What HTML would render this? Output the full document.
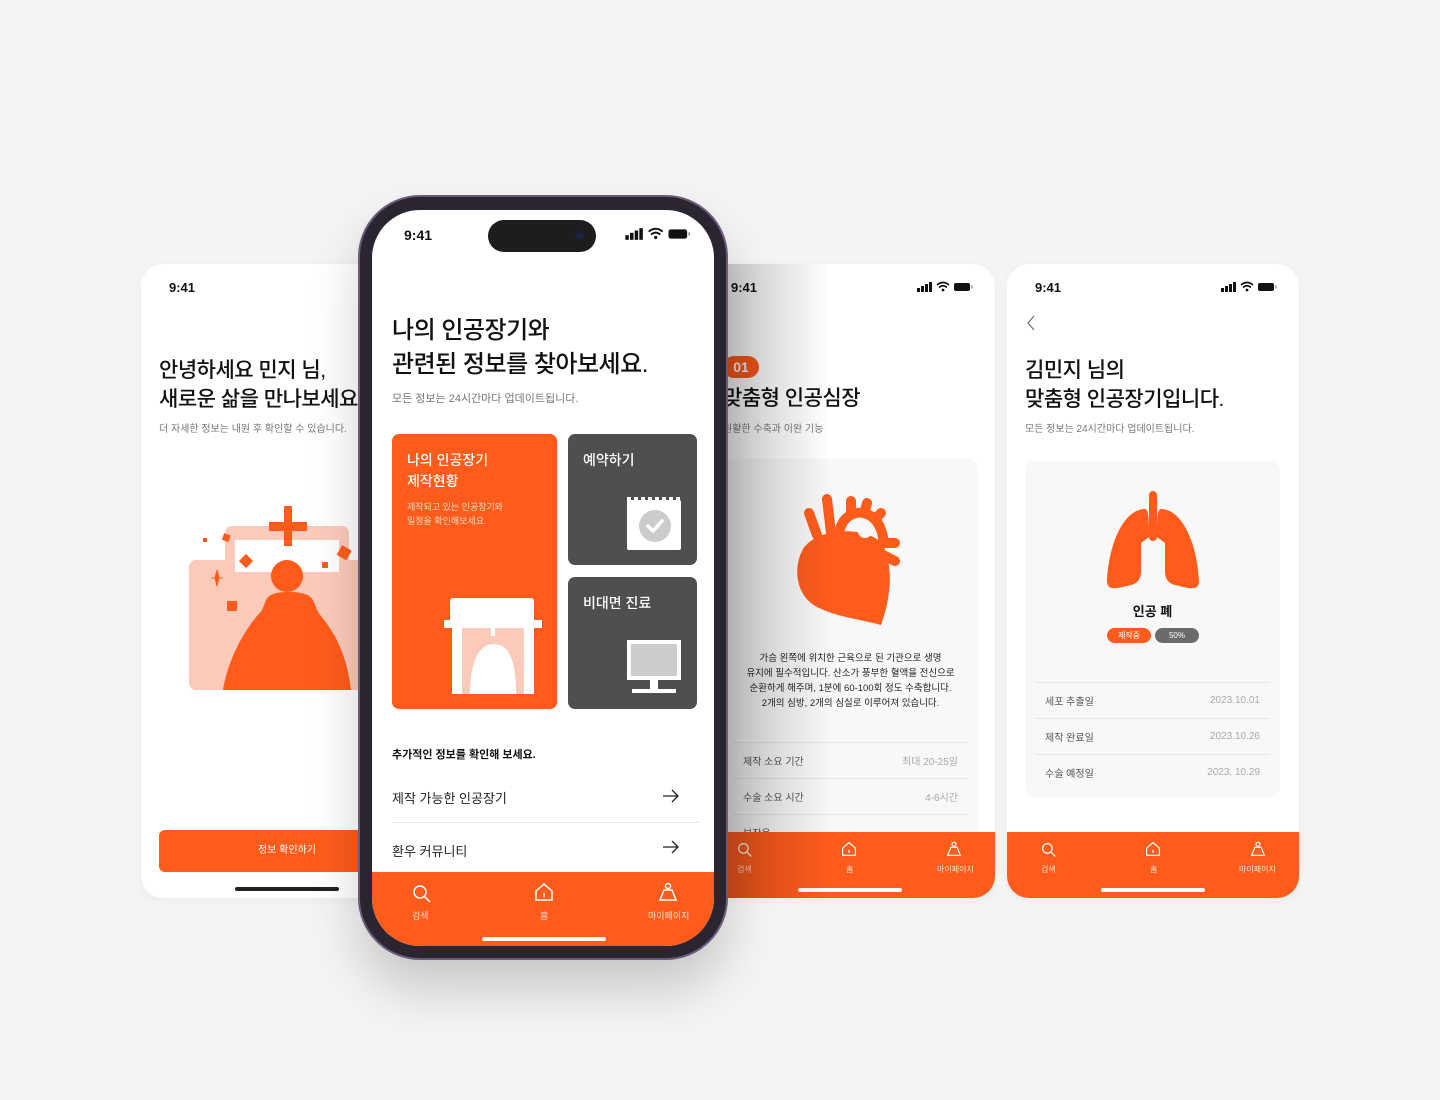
<!DOCTYPE html>
<html><head><meta charset="utf-8"><style>
*{margin:0;padding:0;box-sizing:border-box}
body{width:1440px;height:1100px;background:#f4f4f4;position:relative;overflow:hidden;font-family:"Liberation Sans","Noto Sans CJK KR",sans-serif;color:#111}
.a{position:absolute}
.card{position:absolute;background:#fff;border-radius:22px;overflow:hidden;box-shadow:0 2px 10px rgba(0,0,0,.04)}
.t{font-weight:700;font-size:13px}
.nav{position:absolute;left:0;right:0;bottom:0;height:66px;background:#ff5c1c;color:#ffe0d0;font-size:8px}
.bar{position:absolute;height:4px;border-radius:2px;background:#fff}
.h1{font-size:21px;font-weight:500;line-height:29px;letter-spacing:-.5px}
.sub{font-size:10px;color:#777}
.row{position:absolute;left:0;right:0;height:36px;border-top:1px solid #e6e6e6;font-size:10px;color:#555;padding:0 10px;display:flex;justify-content:space-between;align-items:center}
.row span:last-child{color:#aaa}
svg{position:absolute}
</style></head><body>

<!-- left card -->
<div class="card" style="left:141px;top:264px;width:292px;height:634px">
  <div class="a t" style="left:28px;top:16px">9:41</div>
  <div class="a h1" style="left:18px;top:92px;white-space:nowrap">안녕하세요 민지 님,<br>새로운 삶을 만나보세요</div>
  <div class="a sub" style="left:18px;top:156px">더 자세한 정보는 내원 후 확인할 수 있습니다.</div>
  <svg style="left:48px;top:240px" width="180" height="190" viewBox="0 0 180 190">
    <rect x="36" y="22" width="124" height="60" rx="7" fill="#fccabb"/>
    <rect x="0" y="56" width="180" height="130" rx="7" fill="#fccabb"/>
    <rect x="46" y="36" width="104" height="32" fill="#fff"/>
    <rect x="95" y="2" width="8" height="40" fill="#ff5c1c"/><rect x="80" y="18" width="38" height="9" fill="#ff5c1c"/>
    <circle cx="98" cy="72" r="16" fill="#ff5c1c"/>
    <path d="M34 186 C40 150 60 120 70 110 C80 100 70 88 100 88 C130 88 122 100 132 112 C145 128 158 150 162 186Z" fill="#ff5c1c"/>
    <rect x="52" y="52" width="10" height="10" fill="#ff5c1c" transform="rotate(45 57 57)"/>
    <rect x="38" y="97" width="10" height="10" fill="#ff5c1c"/>
    <rect x="150" y="43" width="11" height="11" fill="#ff5c1c" transform="rotate(30 155 48)"/>
    <rect x="34" y="30" width="7" height="7" fill="#ff5c1c" transform="rotate(20 37 33)"/>
    <rect x="133" y="58" width="6" height="6" fill="#ff5c1c"/>
    <rect x="14" y="34" width="4" height="4" fill="#ff5c1c"/>
    <path d="M28 66 L30 74 L28 82 L26 74Z M22 74 H34" fill="#ff5c1c" stroke="#ff5c1c" stroke-width="1"/>
  </svg>
  <div class="a" style="left:18px;top:566px;width:256px;height:42px;background:#ff5c1c;border-radius:6px;color:#fff;font-size:10px;text-align:center;line-height:42px">정보 확인하기</div>
  <div class="bar" style="left:94px;top:623px;width:104px;background:#222"></div>
</div>

<!-- heart card -->
<div class="card" style="left:703px;top:264px;width:292px;height:634px">
  <div class="a t" style="left:28px;top:16px">9:41</div>
  <svg style="left:214px;top:17px" width="56" height="12" viewBox="0 0 56 12"><rect x="0" y="7" width="3" height="4" fill="#111"/><rect x="4" y="5" width="3" height="6" fill="#111"/><rect x="8" y="3" width="3" height="8" fill="#111"/><rect x="12" y="1" width="3" height="10" fill="#111"/><path d="M20 4 Q26 -1 32 4 M22 6.5 Q26 3 30 6.5" stroke="#111" stroke-width="1.6" fill="none"/><circle cx="26" cy="9" r="1.4" fill="#111"/><rect x="37" y="2" width="16" height="8" rx="2" fill="#111"/><rect x="54" y="4.5" width="1.5" height="3" fill="#999"/></svg>
  <div class="a" style="left:20px;top:92px;width:36px;height:22px;border-radius:11px;background:#ff5c1c;color:#fff;font-weight:700;font-size:14px;text-align:center;line-height:22px">01</div>
  <div class="a h1" style="left:20px;top:120px">맞춤형 인공심장</div>
  <div class="a sub" style="left:20px;top:156px">원활한 수축과 이완 기능</div>
  <div class="a" style="left:20px;top:195px;width:255px;height:420px;background:#f8f8f8;border-radius:10px">
    <svg style="left:72px;top:32px" width="110" height="140" viewBox="0 0 110 140">
      <g stroke="#ff5c1c" stroke-width="10" stroke-linecap="round" fill="none">
        <path d="M14 22 L22 44"/><path d="M32 8 L36 42"/>
        <path d="M44 44 C46 24 62 18 74 24 C82 28 86 36 88 46"/>
        <path d="M56 22 L56 10"/><path d="M70 20 L72 12"/><path d="M80 28 L86 22"/>
        <path d="M86 52 L100 52"/><path d="M88 64 L100 70"/>
      </g>
      <path d="M8 58 C-2 76 0 104 22 116 C42 126 64 128 86 134 C94 112 100 80 88 54 C76 36 24 34 8 58Z" fill="#ff5c1c"/>
      <circle cx="70" cy="40" r="7" fill="#f8f8f8"/>
    </svg>
    <div class="a" style="left:0;right:0;top:192px;text-align:center;font-size:9.5px;line-height:15px;color:#222">가슴 왼쪽에 위치한 근육으로 된 기관으로 생명<br>유지에 필수적입니다. 산소가 풍부한 혈액을 전신으로<br>순환하게 해주며, 1분에 60-100회 정도 수축합니다.<br>2개의 심방, 2개의 심실로 이루어져 있습니다.</div>
    <div class="row" style="top:283px;margin:0 10px"><span>제작 소요 기간</span><span>최대 20-25일</span></div>
    <div class="row" style="top:319px;margin:0 10px"><span>수술 소요 시간</span><span>4-6시간</span></div>
    <div class="row" style="top:355px;margin:0 10px"><span>부작용</span><span></span></div>
  </div>
  <div class="nav">
    <svg style="left:34px;top:10px" width="16" height="16" viewBox="0 0 20 20" fill="none" stroke="#fff" stroke-width="1.5"><circle cx="8" cy="8" r="6"/><path d="M12.5 12.5L18 18"/></svg>
    <svg style="left:138px;top:9px" width="16" height="16" viewBox="0 0 20 20" fill="none" stroke="#fff" stroke-width="1.5"><path d="M2 9L10 2L18 9V18H2Z"/><path d="M10 11V15"/></svg>
    <svg style="left:243px;top:9px" width="16" height="16" viewBox="0 0 20 20" fill="none" stroke="#fff" stroke-width="1.5"><circle cx="10" cy="4" r="2.5"/><path d="M6 8H14L18 18H2Z"/></svg>
    <div class="a" style="left:34px;top:32px">검색</div><div class="a" style="left:143px;top:32px">홈</div><div class="a" style="left:234px;top:32px">마이페이지</div>
    <div class="bar" style="left:95px;top:56px;width:104px"></div>
  </div>
</div>
<div class="a" style="left:700px;top:264px;width:130px;height:634px;background:linear-gradient(90deg,rgba(0,0,0,.28),rgba(0,0,0,0))"></div>

<!-- lung card -->
<div class="card" style="left:1007px;top:264px;width:292px;height:634px">
  <div class="a t" style="left:28px;top:16px">9:41</div>
  <svg style="left:214px;top:17px" width="56" height="12" viewBox="0 0 56 12"><rect x="0" y="7" width="3" height="4" fill="#111"/><rect x="4" y="5" width="3" height="6" fill="#111"/><rect x="8" y="3" width="3" height="8" fill="#111"/><rect x="12" y="1" width="3" height="10" fill="#111"/><path d="M20 4 Q26 -1 32 4 M22 6.5 Q26 3 30 6.5" stroke="#111" stroke-width="1.6" fill="none"/><circle cx="26" cy="9" r="1.4" fill="#111"/><rect x="37" y="2" width="16" height="8" rx="2" fill="#111"/><rect x="54" y="4.5" width="1.5" height="3" fill="#999"/></svg>
  <svg style="left:18px;top:50px" width="12" height="18" viewBox="0 0 12 18"><path d="M9 2L3 9L9 16" stroke="#777" stroke-width="1.3" fill="none"/></svg>
  <div class="a h1" style="left:18px;top:92px">김민지 님의<br>맞춤형 인공장기입니다.</div>
  <div class="a sub" style="left:18px;top:156px">모든 정보는 24시간마다 업데이트됩니다.</div>
  <div class="a" style="left:18px;top:197px;width:255px;height:336px;background:#f8f8f8;border-radius:10px">
    <svg style="left:80px;top:30px" width="96" height="102" viewBox="0 0 96 102">
      <rect x="44" y="0" width="8" height="50" rx="4" fill="#ff5c1c"/>
      <path d="M40 18 C20 18 4 50 2 90 C2 102 16 96 26 94 C34 92 36 86 36 80 L36 52 L44 46 C44 30 44 18 40 18Z" fill="#ff5c1c"/>
      <path d="M56 18 C76 18 92 50 94 90 C94 102 80 96 70 94 C62 92 60 86 60 80 L60 52 L52 46 C52 30 52 18 56 18Z" fill="#ff5c1c"/>
    </svg>
    <div class="a" style="left:0;right:0;top:140px;text-align:center;font-weight:700;font-size:13px">인공 폐</div>
    <div class="a" style="left:82px;top:167px;width:44px;height:15px;border-radius:8px;background:#ff5c1c;color:#fff;font-size:8px;text-align:center;line-height:15px">제작중</div>
    <div class="a" style="left:130px;top:167px;width:44px;height:15px;border-radius:8px;background:#6b6b6b;color:#fff;font-size:8px;text-align:center;line-height:15px">50%</div>
    <div class="row" style="top:221px;margin:0 10px"><span>세포 추출일</span><span>2023.10.01</span></div>
    <div class="row" style="top:257px;margin:0 10px"><span>제작 완료일</span><span>2023.10.26</span></div>
    <div class="row" style="top:293px;margin:0 10px"><span>수술 예정일</span><span>2023. 10.29</span></div>
  </div>
  <div class="nav">
    <svg style="left:34px;top:10px" width="16" height="16" viewBox="0 0 20 20" fill="none" stroke="#fff" stroke-width="1.5"><circle cx="8" cy="8" r="6"/><path d="M12.5 12.5L18 18"/></svg>
    <svg style="left:138px;top:9px" width="16" height="16" viewBox="0 0 20 20" fill="none" stroke="#fff" stroke-width="1.5"><path d="M2 9L10 2L18 9V18H2Z"/><path d="M10 11V15"/></svg>
    <svg style="left:243px;top:9px" width="16" height="16" viewBox="0 0 20 20" fill="none" stroke="#fff" stroke-width="1.5"><circle cx="10" cy="4" r="2.5"/><path d="M6 8H14L18 18H2Z"/></svg>
    <div class="a" style="left:34px;top:32px">검색</div><div class="a" style="left:143px;top:32px">홈</div><div class="a" style="left:232px;top:32px">마이페이지</div>
    <div class="bar" style="left:94px;top:56px;width:104px"></div>
  </div>
</div>

<!-- center phone -->
<div class="a" style="left:358px;top:195px;width:370px;height:765px;border-radius:62px;background:#2a2530;border:2px solid #6b5a78;box-shadow:0 30px 50px rgba(0,0,0,.18)"></div>
<div class="a" style="left:372px;top:210px;width:342px;height:736px;border-radius:48px;background:#fff;overflow:hidden">
  <div class="a t" style="left:32px;top:17px;font-size:14px">9:41</div>
  <div class="a" style="left:116px;top:10px;width:108px;height:32px;border-radius:16px;background:#1d1d1f"></div>
  <div class="a" style="left:203px;top:21px;width:9px;height:9px;border-radius:50%;background:#1c2340"></div>
  <svg style="left:252px;top:17px" width="68" height="14" viewBox="0 0 56 12"><rect x="0" y="7" width="3" height="4" fill="#111"/><rect x="4" y="5" width="3" height="6" fill="#111"/><rect x="8" y="3" width="3" height="8" fill="#111"/><rect x="12" y="1" width="3" height="10" fill="#111"/><path d="M20 4 Q26 -1 32 4 M22 6.5 Q26 3 30 6.5" stroke="#111" stroke-width="1.6" fill="none"/><circle cx="26" cy="9" r="1.4" fill="#111"/><rect x="37" y="2" width="16" height="8" rx="2" fill="#111"/><rect x="54" y="4.5" width="1.5" height="3" fill="#999"/></svg>
  <div class="a" style="left:20px;top:104px;font-size:24px;font-weight:500;line-height:34px;letter-spacing:-.5px">나의 인공장기와<br>관련된 정보를 찾아보세요.</div>
  <div class="a" style="left:20px;top:180px;font-size:11px;color:#777">모든 정보는 24시간마다 업데이트됩니다.</div>
  <div class="a" style="left:20px;top:224px;width:165px;height:275px;border-radius:7px;background:#ff5c1c">
    <div class="a" style="left:15px;top:16px;color:#fff;font-size:14px;font-weight:500;line-height:21px">나의 인공장기<br>제작현황</div>
    <div class="a" style="left:15px;top:66px;color:#ffd5c2;font-size:9px;line-height:14px">제작되고 있는 인공장기와<br>일정을 확인해보세요.</div>
    <svg style="left:52px;top:164px" width="100" height="100" viewBox="0 0 100 100">
      <rect x="6" y="0" width="84" height="30" rx="3" fill="#fff"/><rect x="0" y="22" width="98" height="8" fill="#fff"/>
      <rect x="8" y="30" width="82" height="66" fill="#fff"/><rect x="18" y="30" width="62" height="66" fill="#fccabb"/>
      <path d="M26 96 C26 70 32 46 50 46 C68 46 72 70 72 96Z" fill="#fff"/>
      <rect x="47" y="30" width="4" height="8" fill="#fff"/>
    </svg>
  </div>
  <div class="a" style="left:196px;top:224px;width:129px;height:131px;border-radius:7px;background:#4f4f4f">
    <div class="a" style="left:15px;top:16px;color:#fff;font-size:14px;font-weight:500">예약하기</div>
    <div class="a" style="left:59px;top:66px;width:54px;height:50px;background:#fff;border-radius:2px"></div>
    <div class="a" style="left:59px;top:63px;width:54px;height:5px;background:repeating-linear-gradient(90deg,#fff 0 4px,transparent 4px 7px)"></div>
    <svg style="left:71px;top:76px" width="32" height="32" viewBox="0 0 32 32"><circle cx="16" cy="16" r="16" fill="#ccc"/><path d="M9 16L14 21L23 11" stroke="#fff" stroke-width="3.5" fill="none" stroke-linecap="round" stroke-linejoin="round"/></svg>
  </div>
  <div class="a" style="left:196px;top:367px;width:129px;height:132px;border-radius:7px;background:#4f4f4f">
    <div class="a" style="left:15px;top:16px;color:#fff;font-size:14px;font-weight:500">비대면 진료</div>
    <div class="a" style="left:59px;top:63px;width:54px;height:40px;background:#fff;border:4px solid #fff;"><div style="width:100%;height:100%;background:#ccc"></div></div>
    <div class="a" style="left:82px;top:103px;width:8px;height:10px;background:#fff"></div>
    <div class="a" style="left:64px;top:112px;width:44px;height:4px;background:#fff"></div>
  </div>
  <div class="a" style="left:20px;top:536px;font-size:11px;font-weight:700">추가적인 정보를 확인해 보세요.</div>
  <div class="a" style="left:20px;top:578px;font-size:13px;color:#222">제작 가능한 인공장기</div>
  <svg style="left:290px;top:579px" width="18" height="14" viewBox="0 0 18 14"><path d="M1 7H16M10 1L16 7L10 13" stroke="#222" stroke-width="1.3" fill="none"/></svg>
  <div class="a" style="left:20px;top:612px;width:308px;height:1px;background:#e6e6e6"></div>
  <div class="a" style="left:20px;top:631px;font-size:13px;color:#222">환우 커뮤니티</div>
  <svg style="left:290px;top:630px" width="18" height="14" viewBox="0 0 18 14"><path d="M1 7H16M10 1L16 7L10 13" stroke="#222" stroke-width="1.3" fill="none"/></svg>
  <div class="a" style="left:0;top:662px;width:342px;height:80px;background:#ff5c1c;color:#ffe0d0;font-size:9px">
    <svg style="left:40px;top:12px" width="20" height="20" viewBox="0 0 20 20" fill="none" stroke="#fff" stroke-width="1.5"><circle cx="8" cy="8" r="6"/><path d="M12.5 12.5L18 18"/></svg>
    <svg style="left:162px;top:10px" width="20" height="20" viewBox="0 0 20 20" fill="none" stroke="#fff" stroke-width="1.5"><path d="M2 9L10 2L18 9V18H2Z"/><path d="M10 11V15"/></svg>
    <svg style="left:286px;top:10px" width="20" height="20" viewBox="0 0 20 20" fill="none" stroke="#fff" stroke-width="1.5"><circle cx="10" cy="4" r="2.5"/><path d="M6 8H14L18 18H2Z"/></svg>
    <div class="a" style="left:40px;top:37px">검색</div><div class="a" style="left:168px;top:37px">홈</div><div class="a" style="left:276px;top:37px">마이페이지</div>
  </div>
  <div class="bar" style="left:110px;top:727px;width:124px"></div>
</div>
</body></html>
